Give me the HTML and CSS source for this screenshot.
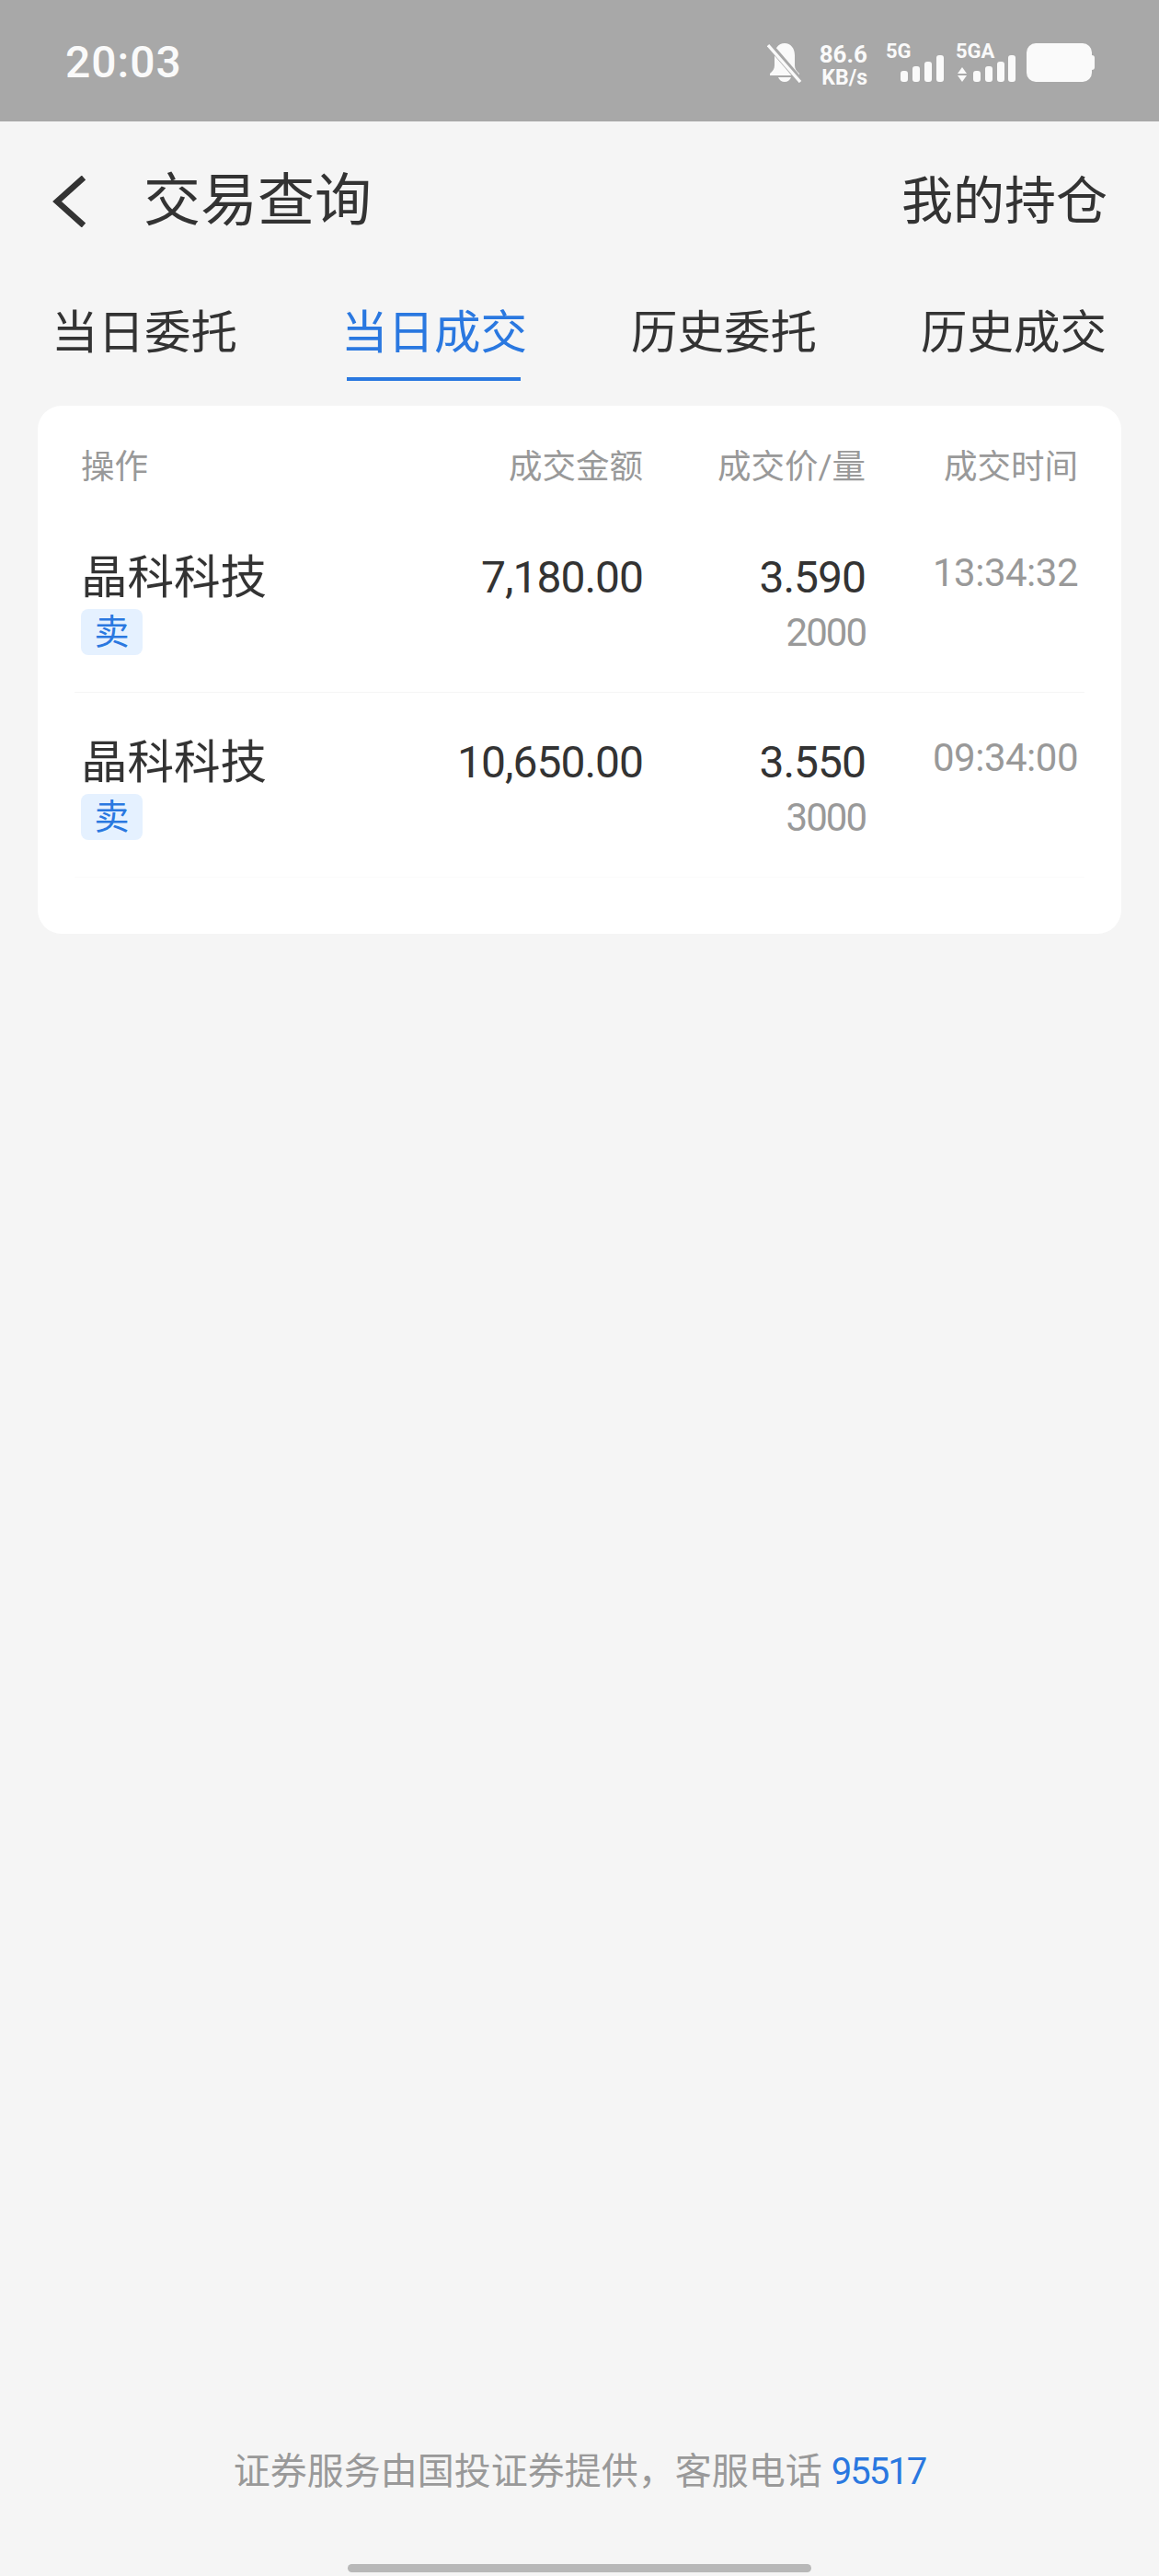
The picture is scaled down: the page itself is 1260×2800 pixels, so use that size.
FILE: index.html
```html
<!DOCTYPE html>
<html lang="zh-CN">
<head>
  <meta charset="UTF-8" />
  <meta name="viewport" content="width=device-width, initial-scale=1.0"/>
  <title>交易查询</title>
  <link rel="stylesheet" href="styles.css">
</head>
<body>

  <div class="status-bar">
    <div class="clock">20:03</div>
    <div class="status-icons">
      <svg class="bell" width="38" height="44" viewBox="0 0 38 44">
        <path fill="#fafafa" d="M19 1c7 0 11 6 11 13v11c0 4 2 6 5 9v2H3v-2c3-3 5-5 5-9V14C8 7 12 1 19 1z"/>
        <path fill="#fafafa" d="M12 38h14c-1 3-4 5-7 5s-6-2-7-5z"/>
        <path stroke="#a8a8a8" stroke-width="7" d="M0 0l38 44"/>
        <path stroke="#fafafa" stroke-width="3.4" d="M1 3l35 40"/>
      </svg>
      <div class="speed">
        <div class="speed-num">86.6</div>
        <div class="speed-unit">KB/s</div>
      </div>
      <div class="net net-5g">
        <div class="net-label">5G</div>
        <svg width="47" height="29" viewBox="0 0 47 29">
          <rect x="0" y="17" width="8" height="12" rx="3" fill="#fafafa"/>
          <rect x="13" y="12" width="8" height="17" rx="3" fill="#fafafa"/>
          <rect x="26" y="7" width="8" height="22" rx="3" fill="#fafafa"/>
          <rect x="39" y="0" width="8" height="29" rx="3" fill="#fafafa"/>
        </svg>
      </div>
      <div class="net net-5ga">
        <div class="net-label">5GA</div>
        <svg width="64" height="29" viewBox="0 0 64 29">
          <path d="M1 20l5-7 5 7z" fill="#fafafa"/>
          <path d="M1 22h10l-5 7z" fill="#fafafa"/>
          <rect x="18" y="17" width="8" height="12" rx="3" fill="#fafafa"/>
          <rect x="31" y="12" width="8" height="17" rx="3" fill="#fafafa"/>
          <rect x="44" y="7" width="8" height="22" rx="3" fill="#fafafa"/>
          <rect x="56" y="0" width="8" height="29" rx="3" fill="#fafafa"/>
        </svg>
      </div>
      <div class="battery"></div>
    </div>
  </div>

  <div class="top-nav">
    <svg class="back" width="38" height="56" viewBox="0 0 38 56">
      <path d="M35 2L6 28l29 26" fill="none" stroke="#333" stroke-width="6.5"/>
    </svg>
    <div class="nav-title">交易查询</div>
    <div class="nav-link">我的持仓</div>
  </div>

  <div class="tabs">
    <div class="tab">当日委托</div>
    <div class="tab tab-active">当日成交</div>
    <div class="tab">历史委托</div>
    <div class="tab">历史成交</div>
  </div>

  <div class="card">
    <div class="grid head-row">
      <div>操作</div>
      <div class="right">成交金额</div>
      <div class="right">成交价/量</div>
      <div class="right">成交时间</div>
    </div>

    <div class="grid row">
      <div>
        <div class="name">晶科科技</div>
        <div class="badge">卖</div>
      </div>
      <div class="right num">7,180.00</div>
      <div class="right">
        <div class="num">3.590</div>
        <div class="sub">2000</div>
      </div>
      <div class="right time">13:34:32</div>
    </div>

    <div class="grid row row-last">
      <div>
        <div class="name">晶科科技</div>
        <div class="badge">卖</div>
      </div>
      <div class="right num">10,650.00</div>
      <div class="right">
        <div class="num">3.550</div>
        <div class="sub">3000</div>
      </div>
      <div class="right time">09:34:00</div>
    </div>
  </div>

  <div class="footer">证券服务由国投证券提供，客服电话 <span class="phone">95517</span></div>
  <div class="home-bar"></div>

</body>
</html>
```

FILE: styles.css
```css
body {
  margin: 0;
  width: 1260px;
  height: 2800px;
  background-color: #f5f5f5;
  color: #333;
  font-family: Roboto, "Noto Sans CJK SC", sans-serif;
  display: flex;
  flex-direction: column;
}

/* status bar */
.status-bar {
  height: 132px;
  flex: none;
  background-color: #a8a8a8;
  color: #fafafa;
  display: flex;
  justify-content: space-between;
  padding: 0 73px 0 71px;
}

.clock {
  font-size: 48px;
  font-weight: 500;
  line-height: 136px;
  letter-spacing: 1px;
}

.status-icons {
  display: flex;
  align-items: flex-start;
  padding-top: 46px;
}

.bell {
  margin-right: 17px;
}

.speed {
  width: 54px;
  margin-right: 20px;
  text-align: right;
  font-weight: 700;
}

.speed-num {
  font-size: 26px;
  line-height: 26px;
}

.speed-unit {
  font-size: 23px;
  line-height: 20px;
  margin-top: 3px;
}

.net {
  display: flex;
  flex-direction: column;
  align-items: flex-end;
}

.net-label {
  align-self: flex-start;
  font-size: 22px;
  font-weight: 700;
  line-height: 19px;
}

.net svg {
  display: block;
  margin-top: -5px;
}

.net-5g {
  width: 63px;
  margin-right: 13px;
}

.net-5ga {
  width: 65px;
  margin-right: 12px;
}

.battery {
  position: relative;
  width: 71px;
  height: 42px;
  margin-top: 1px;
  border-radius: 10px;
  background-color: #fafafa;
}

.battery:after {
  content: "";
  position: absolute;
  left: 71px;
  top: 13px;
  width: 3px;
  height: 16px;
  border-radius: 0 3px 3px 0;
  background-color: #fafafa;
}

/* title row */
.top-nav {
  display: flex;
  align-items: center;
  height: 112px;
  margin-top: 31px;
  padding: 0 56px 0 56px;
}

.back {
  flex: none;
}

.nav-title {
  font-size: 62px;
  line-height: 80px;
  margin-left: 62px;
}

.nav-link {
  font-size: 56px;
  line-height: 80px;
  margin-left: auto;
}

/* tabs */
.tabs {
  display: flex;
  justify-content: space-between;
  margin-top: 57px;
  padding: 0 57px 0 56px;
}

.tab {
  font-size: 50.5px;
  line-height: 60px;
  height: 60px;
  position: relative;
}

.tab-active {
  color: #2a78e0;
}

.tab-active:after {
  content: "";
  position: absolute;
  left: 6px;
  right: 7px;
  top: 78px;
  height: 4px;
  background-color: #2a78e0;
}

/* trades card */
.card {
  margin: 49px 41px 0;
  height: 574px;
  background-color: #fff;
  border-radius: 26px;
}

.grid {
  display: grid;
  grid-template-columns: 301px 310px 242px 231px;
  margin: 0 40px;
  padding: 0 8px 0 7px;
}

.right {
  text-align: right;
}

.head-row {
  padding-top: 42px;
  padding-bottom: 19px;
  font-size: 36.5px;
  line-height: 50px;
  color: #999;
}

.row {
  height: 201px;
  box-sizing: border-box;
  padding-top: 46px;
  border-bottom: 1px solid #f5f5f5;
}

.row-last {
  border-bottom-color: #fbfbfb;
}

.name {
  font-size: 50.5px;
  line-height: 60px;
}

.badge {
  width: 67px;
  height: 50px;
  margin-top: 4px;
  border-radius: 8px;
  background-color: #e5f1ff;
  color: #2a78e0;
  font-size: 38px;
  line-height: 50px;
  text-align: center;
}

.num {
  font-size: 48px;
  line-height: 60px;
  letter-spacing: -1px;
}

.sub {
  font-size: 42px;
  line-height: 50px;
  margin-top: 5px;
  letter-spacing: -2px;
  color: #999;
}

.time {
  font-size: 42px;
  line-height: 50px;
  letter-spacing: -0.5px;
  color: #999;
}

/* bottom note */
.footer {
  margin-top: auto;
  font-size: 40px;
  line-height: 50px;
  color: #999;
  text-align: center;
}

.phone {
  color: #2a78e0;
  letter-spacing: -2px;
}

.home-bar {
  flex: none;
  width: 504px;
  height: 9px;
  margin: 75px auto 4px;
  border-radius: 5px;
  background-color: #b8b8b8;
}
```
